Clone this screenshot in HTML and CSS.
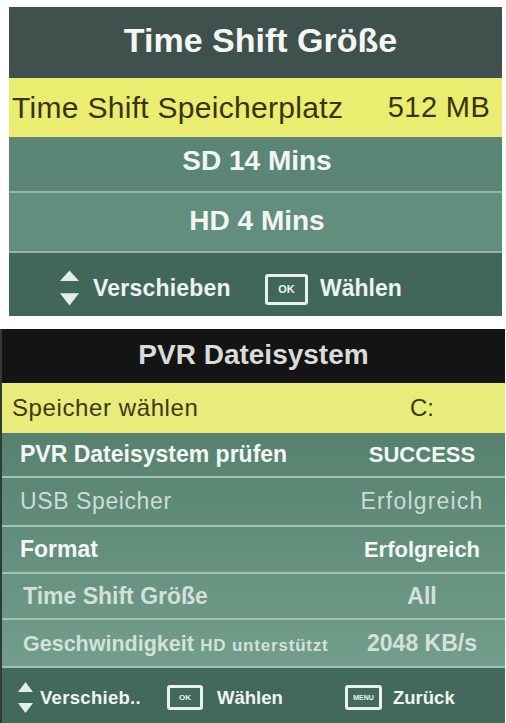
FILE: index.html
```html
<!DOCTYPE html>
<html lang="de">
<head>
<meta charset="utf-8">
<title>Time Shift / PVR Dateisystem</title>
<link rel="stylesheet" href="styles.css">
</head>
<body>
<div class="panel top">
  <div class="t-title">Time Shift Größe</div>
  <div class="t-sel">
    <span class="t-sel-label">Time Shift Speicherplatz</span>
    <span class="t-sel-val">512 MB</span>
  </div>
  <div class="t-row t-row1">SD 14 Mins</div>
  <div class="t-row t-row2">HD 4 Mins</div>
  <div class="t-foot">
    <svg class="arrows-lg" viewBox="0 0 20 38" width="19" height="37">
      <polygon points="10,0 20,11 0,11" fill="#e4efe9"/>
      <polygon points="0,24 20,24 10,37" fill="#e4efe9"/>
    </svg>
    <span class="t-foot-move">Verschieben</span>
    <span class="key-lg">OK</span>
    <span class="t-foot-sel">Wählen</span>
  </div>
</div>

<div class="panel bottom">
  <div class="b-title">PVR Dateisystem</div>
  <div class="b-sel">
    <span class="b-sel-label">Speicher wählen</span>
    <span class="b-val">C:</span>
  </div>
  <div class="b-rows">
    <div class="b-row h45 on"><span class="b-label">PVR Dateisystem prüfen</span><span class="b-val">SUCCESS</span></div>
    <div class="b-row h49 off"><span class="b-label">USB Speicher</span><span class="b-val">Erfolgreich</span></div>
    <div class="b-row h47 on"><span class="b-label">Format</span><span class="b-val">Erfolgreich</span></div>
    <div class="b-row h46 dim"><span class="b-label">Time Shift Größe</span><span class="b-val">All</span></div>
    <div class="b-row h48 dim"><span class="b-label"><span class="geschw">Geschwindigkeit</span> <span class="hd-note">HD unterstützt</span></span><span class="b-val">2048 KB/s</span></div>
  </div>
  <div class="b-foot">
    <svg class="arrows-sm" viewBox="0 0 15 31" width="15" height="31">
      <polygon points="7.5,0 15,10 0,10" fill="#e4efe9"/>
      <polygon points="0,21 15,21 7.5,31" fill="#e4efe9"/>
    </svg>
    <span class="b-foot-move">Verschieb..</span>
    <span class="key-sm">OK</span>
    <span class="b-foot-sel">Wählen</span>
    <span class="key-sm key-menu">MENU</span>
    <span class="b-foot-back">Zurück</span>
  </div>
</div>
</body>
</html>
```

FILE: styles.css
```css
* { box-sizing: border-box; }

html, body {
  margin: 0;
  padding: 0;
  background: #ffffff;
}

body {
  width: 506px;
  height: 723px;
  overflow: hidden;
  font-family: "Liberation Sans", Arial, sans-serif;
}

.panel { display: flex; flex-direction: column; }

/* ---------- top panel ---------- */
.top {
  margin: 7px 0 0 9px;
  width: 493px;
}

.t-title {
  height: 71px;
  background: #3f514c;
  color: #f4f6f4;
  font-weight: bold;
  font-size: 34px;
  display: flex;
  align-items: center;
  justify-content: center;
  padding: 0 0 4px 10px;
}

.t-sel {
  height: 59px;
  background: #eaed70;
  color: #363510;
  display: grid;
  grid-template-columns: 1fr 126px;
  align-items: center;
  padding-left: 3px;
}

.t-sel-label { font-size: 30px; letter-spacing: 0.3px; }
.t-sel-val { font-size: 29px; letter-spacing: 0.4px; text-align: center; }

.t-row {
  display: flex;
  align-items: center;
  justify-content: center;
  color: #f2f6f3;
  font-weight: bold;
  font-size: 28px;
  border-bottom: 2px solid #93b6a7;
  padding-left: 3px;
}
.t-row1 { height: 56px; background: #5b8676; padding-bottom: 6px; }
.t-row2 { height: 60px; background: #628e7d; padding-bottom: 2px; }

.t-foot {
  height: 63px;
  background: #41675a;
  display: flex;
  align-items: center;
  padding: 7px 0 0 51px;
  color: #eef4f0;
  font-weight: bold;
  font-size: 23px;
}

.arrows-lg { flex: none; }
.t-foot-move { margin-left: 14px; width: 137px; letter-spacing: 0.2px; }
.key-lg {
  margin-left: 35px;
  width: 43px;
  height: 31px;
  border: 3px solid #e9f1ec;
  border-radius: 3px;
  font-size: 11px;
  display: flex;
  align-items: center;
  justify-content: center;
  margin-top: 2px;
}
.t-foot-sel { margin-left: 12px; }

/* ---------- bottom panel ---------- */
.bottom {
  margin-top: 13px;
  width: 505px;
  border-left: 2px solid #2e3b36;
}

.b-title {
  height: 54px;
  background: #141414;
  color: #d9dcda;
  font-weight: bold;
  font-size: 28px;
  display: flex;
  align-items: center;
  justify-content: center;
  padding-bottom: 2px;
}

.b-sel {
  height: 50px;
  background: #e9eb7a;
  color: #3c3a10;
  display: grid;
  grid-template-columns: 1fr 166px;
  align-items: center;
  padding-left: 10px;
}
.b-sel-label { font-size: 24px; letter-spacing: 0.6px; }
.b-sel .b-val { font-size: 24px; font-weight: normal; color: #3c3a10; }

.b-rows {
  background: linear-gradient(#57816f, #739e8b);
}

.b-row {
  display: grid;
  grid-template-columns: 1fr 166px;
  align-items: center;
  padding-left: 18px;
  border-bottom: 2px solid #a2c2b4;
  font-size: 23px;
}
.h45 { height: 45px; }
.h49 { height: 49px; }
.h47 { height: 47px; }
.h46 { height: 46px; }
.h48 { height: 48px; }

.b-val { text-align: center; }

.on { color: #f4f7f5; font-weight: bold; }
.on .b-val { font-size: 22px; }
.off { color: #cddcd4; font-weight: normal; letter-spacing: 0.6px; }
.off .b-val { letter-spacing: 1.2px; }
.dim { color: #d3e1da; font-weight: bold; }
.dim .b-label { padding-left: 3px; }

.geschw { font-size: 21.5px; }
.hd-note { font-size: 17px; letter-spacing: 0.8px; }

.b-foot {
  height: 55px;
  background: #42695c;
  display: flex;
  align-items: center;
  padding: 4px 0 0 16px;
  color: #eef4f0;
  font-weight: bold;
  font-size: 18.5px;
}
.arrows-sm { flex: none; }
.b-foot-move { margin-left: 7px; width: 100px; letter-spacing: 0.3px; }
.key-sm {
  margin-left: 27px;
  width: 36px;
  height: 25px;
  border: 3px solid #e9f1ec;
  border-radius: 3px;
  font-size: 8px;
  display: flex;
  align-items: center;
  justify-content: center;
  flex: none;
}
.b-foot-sel { margin-left: 14px; width: 65px; }
.key-menu { margin-left: 63px; width: 37px; font-size: 7px; }
.b-foot-back { margin-left: 11px; }
```
